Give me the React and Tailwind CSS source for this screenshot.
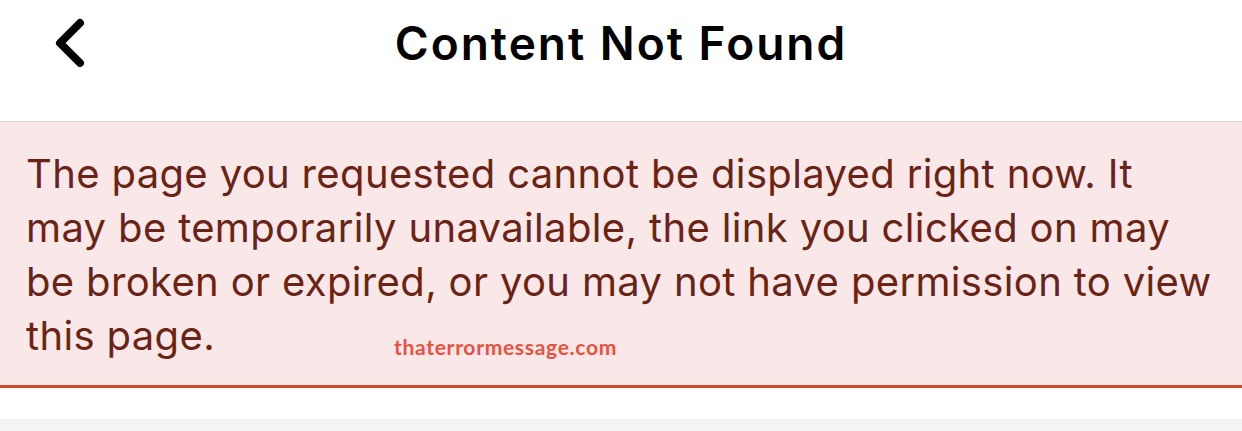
import React from 'react';

function BackChevron() {
  return (
    <svg width="40" height="52" viewBox="0 0 40 52" fill="none">
      <path d="M31 6 L11 26 L31 46" stroke="#000" strokeWidth="8" strokeLinecap="round" strokeLinejoin="round" />
    </svg>
  );
}

export default function App() {
  return (
    <div className="w-[1242px] h-[431px] bg-white overflow-hidden font-['Inter',sans-serif]">
      {/* nav bar */}
      <header className="h-[122px] grid grid-cols-[1fr_auto_1fr] items-start pt-[14px] border-b border-[#e6d6d6]">
        <div className="flex items-center h-[58px] pl-[49px]">
          <BackChevron />
        </div>
        <h1 className="h-[58px] leading-[58px] text-[46px] font-semibold text-black tracking-[2px]">Content Not Found</h1>
        <div />
      </header>

      {/* error banner */}
      <div className="relative bg-[#f9e8e7] border-b-[3px] border-[#d34b2a] pl-[26px] pr-[10px] pt-[25px] pb-[22px]">
        <p className="text-[40px] leading-[54px] text-[#6a2417] whitespace-nowrap tracking-[0.35px]">
          The page you requested cannot be displayed right now. It
          <br />
          may be temporarily unavailable, the link you clicked on may
          <br />
          be broken or expired, or you may not have permission to view
          <br />
          this page.
        </p>
        <span className="absolute left-[394px] top-[209px] text-[21px] font-bold text-[#e8523f] font-['Lato',sans-serif] tracking-[0.7px]">
          thaterrormessage.com
        </span>
      </div>

      <div className="h-[31px] bg-white" />
      <div className="h-[20px] bg-[#f3f5f4]" />
    </div>
  );
}
